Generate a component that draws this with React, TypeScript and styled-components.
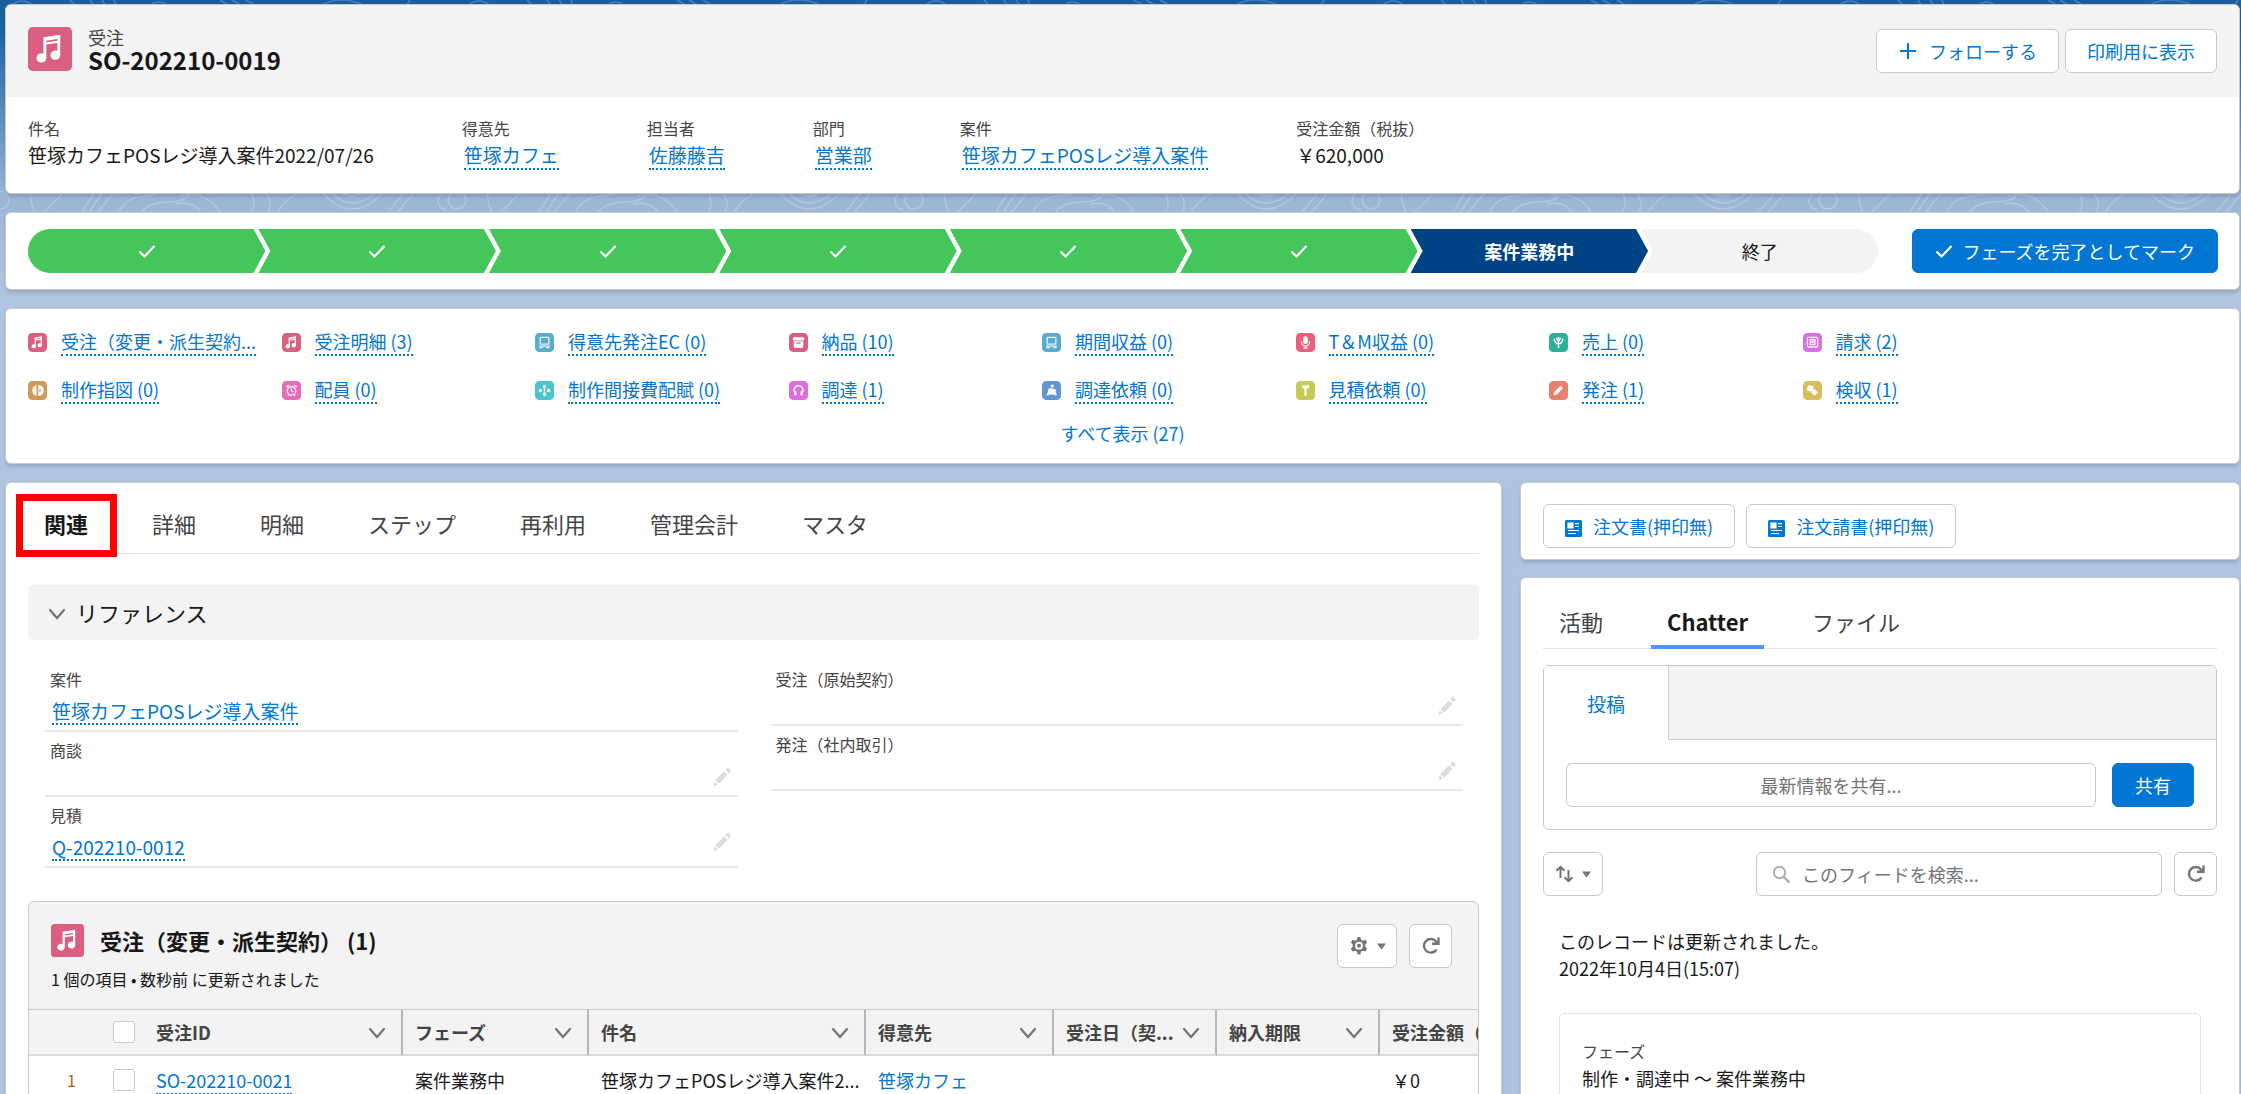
import React from "react";
import styled, { createGlobalStyle, css } from "styled-components";

const blue = "#0176d3";
const line = "#e2e2e2";
const border = "#c9c9c9";

const Global = createGlobalStyle`
  *, *::before, *::after { box-sizing: border-box; }
  body {
    margin: 0;
    background: #b0c4df;
    color: #181818;
    font-family: "Noto Sans CJK JP", "Noto Sans", sans-serif;
    font-size: 18px;
    line-height: 27px;
  }
  button, input { font: inherit; }
  h1, h2, p, dl, dd, ul { margin: 0; padding: 0; }
`;

const Page = styled.div`
  position: relative;
  isolation: isolate;
  display: flex;
  flex-direction: column;
  gap: 18px;
  height: 100vh;
  overflow: hidden;
  padding: 4px 1px 0 5px;
`;

const Backdrop = styled.div`
  position: absolute;
  inset: 0;
  z-index: -1;
  background: linear-gradient(#195e9f 0, #1c62a4 30px, #9ab5d5 196px, #b0c4df 280px);
  svg { display: block; width: 100%; height: 290px; }
`;

const Card = styled.section`
  flex-shrink: 0;
  background: #fff;
  border: 1px solid ${border};
  border-radius: 6px;
  box-shadow: 0 3px 3px rgba(0, 0, 0, 0.12);
`;

const Link = styled.a`
  color: ${blue};
  text-decoration: none;
  white-space: nowrap;
`;

const DottedLink = styled(Link)`
  border-bottom: 2px dotted ${blue};
`;

const buttonBase = css`
  display: inline-flex;
  align-items: center;
  justify-content: center;
  height: 44px;
  border-radius: 6px;
  white-space: nowrap;
  cursor: pointer;
`;

const Button = styled.button`
  ${buttonBase}
  gap: 11px;
  padding: 0 21px;
  background: #fff;
  border: 1px solid ${border};
  color: ${blue};
`;

const BrandButton = styled.button`
  ${buttonBase}
  gap: 9px;
  padding: 0 22px;
  background: ${blue};
  border: 1px solid ${blue};
  color: #fff;
`;

const ToolButton = styled.button<{ $wide?: boolean }>`
  ${buttonBase}
  flex-shrink: 0;
  gap: 8px;
  width: ${(p) => (p.$wide ? 60 : 43)}px;
  padding: 0;
  background: #fff;
  border: 1px solid ${border};
  color: #747474;
`;

/* record header */

const RecordTop = styled.header`
  display: flex;
  align-items: flex-start;
  justify-content: space-between;
  padding: 22px 22px 24px;
  background: #f3f3f3;
  border-radius: 5px 5px 0 0;
`;

const RecordTitle = styled.div`
  display: flex;
  gap: 16px;
  p { line-height: 20px; color: #444; }
  h1 { font-size: 24px; line-height: 26px; font-weight: 700; }
`;

const TitleText = styled.div`
  height: 46px;
`;

const Actions = styled.div`
  display: flex;
  gap: 6px;
  padding-top: 2px;
`;

const Highlights = styled.dl`
  display: flex;
  gap: 88px;
  padding: 19px 22px 23px;
  dt { font-size: 16px; line-height: 24px; color: #444; }
  dd { font-size: 19px; line-height: 30px; white-space: nowrap; }
  dd a { display: inline-block; line-height: 26px; margin-left: 2px; }
`;

/* path */

const PathCard = styled(Card)`
  display: flex;
  align-items: center;
  gap: 34px;
  padding: 16px 21px 16px 22px;
`;

const PathList = styled.ol`
  flex: 1;
  display: flex;
  height: 44px;
  margin: 0;
  padding: 0;
  list-style: none;
  border-radius: 22px;
  overflow: hidden;
`;

const Step = styled.li<{ $state: "done" | "current" | "todo" }>`
  flex: 1;
  display: flex;
  align-items: center;
  justify-content: center;
  background: ${(p) => ({ done: "#45c65a", current: "#014486", todo: "#f3f3f3" })[p.$state]};
  color: ${(p) => (p.$state === "todo" ? "#181818" : "#fff")};
  font-weight: ${(p) => (p.$state === "current" ? 700 : 400)};
  clip-path: polygon(0 0, calc(100% - 12px) 0, 100% 50%, calc(100% - 12px) 100%, 0 100%, 12px 50%);
  & + & { margin-left: -7px; }
  &:first-child { clip-path: polygon(0 0, calc(100% - 12px) 0, 100% 50%, calc(100% - 12px) 100%, 0 100%); }
  &:last-child { clip-path: polygon(0 0, 100% 0, 100% 100%, 0 100%, 12px 50%); }
`;

/* related quick links */

const QuickCard = styled(Card)`
  display: flex;
  flex-direction: column;
  align-items: center;
  gap: 16px;
  padding: 19px 22px 16px;
`;

const QuickGrid = styled.ul`
  align-self: stretch;
  display: grid;
  grid-template-columns: repeat(8, minmax(0, 1fr));
  row-gap: 20px;
  margin-right: 161px;
  list-style: none;
`;

const QuickItem = styled.li`
  display: flex;
  align-items: center;
  gap: 14px;
  svg { flex-shrink: 0; }
  a { line-height: 26px; }
`;

/* main columns */

const Columns = styled.div`
  flex: 1;
  min-height: 0;
  display: grid;
  grid-template-columns: minmax(0, 1497fr) minmax(0, 720fr);
  gap: 18px;
`;

const MainCard = styled(Card)`
  padding: 10px 22px 0;
`;

const Side = styled.div`
  display: flex;
  flex-direction: column;
  gap: 17px;
`;

const Tabs = styled.div<{ $height: number }>`
  display: flex;
  gap: 64px;
  height: ${(p) => p.$height}px;
  padding: 0 16px;
  border-bottom: 1px solid ${line};
`;

const Tab = styled.button<{ $active?: boolean }>`
  position: relative;
  padding: 0;
  background: none;
  border: 0;
  color: ${(p) => (p.$active ? "#181818" : "#444")};
  font-size: 22px;
  line-height: 32px;
  font-weight: ${(p) => (p.$active ? 700 : 400)};
  cursor: pointer;
  ${(p) =>
    p.$active &&
    css`
      &::after {
        content: "";
        position: absolute;
        left: -16px;
        right: -16px;
        bottom: -1px;
        height: 4px;
        background: #4b96ff;
      }
    `}
`;

const Marker = styled.span`
  position: absolute;
  z-index: 1;
  inset: 1px -29px -4px -28px;
  border: 7px solid #f00;
`;

const SectionHead = styled.button`
  display: flex;
  align-items: center;
  gap: 10px;
  width: 100%;
  height: 55px;
  margin: 31px 0 21px;
  padding: 0 20px;
  background: #f3f3f3;
  border: 0;
  border-radius: 5px;
  color: #181818;
  font-size: 22px;
  cursor: pointer;
`;

const FieldColumns = styled.div`
  display: grid;
  grid-template-columns: 1fr 1fr;
  column-gap: 33px;
  padding: 0 16px 0 17px;
`;

const Field = styled.div<{ $filled?: boolean }>`
  display: flex;
  justify-content: space-between;
  height: ${(p) => (p.$filled ? 71 : 65)}px;
  padding: 6px 7px 0 5px;
  border-bottom: 2px solid #e8e8e8;
`;

const FieldBody = styled.div`
  display: flex;
  flex-direction: column;
  align-items: flex-start;
  gap: 7px;
  span { font-size: 16px; line-height: 24px; color: #444; }
  a { margin-left: 2px; font-size: 19px; line-height: 25px; }
`;

const EditButton = styled.button`
  align-self: flex-start;
  display: flex;
  margin-top: 29px;
  padding: 0;
  background: none;
  border: 0;
  color: #dcdcdc;
  cursor: pointer;
`;

/* related list */

const ListCard = styled.section`
  height: 320px;
  margin-top: 33px;
  border: 1px solid ${border};
  border-radius: 6px;
  background: #f3f3f3;
  overflow: hidden;
`;

const ListHead = styled.header`
  display: flex;
  justify-content: space-between;
  align-items: flex-start;
  height: 107px;
  padding: 22px 26px 0 22px;
  p { padding-top: 10px; font-size: 16px; line-height: 24px; }
`;

const ListTitle = styled.div`
  display: flex;
  align-items: center;
  gap: 16px;
  h2 { font-size: 22px; line-height: 33px; font-weight: 700; }
`;

const ToolRow = styled.div`
  display: flex;
  gap: 12px;
`;

const Table = styled.table`
  table-layout: fixed;
  width: 1624px;
  border-collapse: separate;
  border-spacing: 0;
  background: #fff;
  th, td { padding: 0 12px; text-align: left; white-space: nowrap; }
  th { height: 47px; background: #f3f3f3; border-top: 1px solid ${border}; border-bottom: 2px solid #dddbda; color: #444; font-weight: 700; }
  td { height: 48px; }
  td a { line-height: 26px; }
`;

const ColHead = styled.th<{ $plain?: boolean }>`
  ${(p) => !p.$plain && css`border-right: 2px solid #b8b8b8;`}
`;

const HeadCell = styled.div`
  display: flex;
  align-items: center;
  justify-content: space-between;
  padding-right: 3px;
  svg { flex-shrink: 0; }
`;

const RowNumber = styled.td`
  && { padding-right: 25px; text-align: right; color: #a86403; font-size: 16px; }
`;

const Tick = styled.input`
  appearance: none;
  display: block;
  width: 22px;
  height: 22px;
  margin: 0;
  background: #fff;
  border: 1px solid ${border};
  border-radius: 3px;
`;

/* side panel */

const DocCard = styled(Card)`
  display: flex;
  gap: 11px;
  padding: 21px 22px 11px;
`;

const FeedCard = styled(Card)`
  flex: 1;
  padding: 16px 22px 0;
`;

const Publisher = styled.div`
  margin: 16px 0 22px;
  border: 1px solid ${border};
  border-radius: 6px;
  overflow: hidden;
`;

const PublisherTabs = styled.div`
  display: flex;
  height: 74px;
  &::after { content: ""; flex: 1; background: #f3f3f3; border-bottom: 1px solid ${border}; }
`;

const PublisherTab = styled.button`
  width: 125px;
  padding: 0;
  background: #fff;
  border: 0;
  border-right: 1px solid ${border};
  color: ${blue};
  font-size: 19px;
  cursor: pointer;
`;

const ShareRow = styled.div`
  display: flex;
  gap: 16px;
  padding: 23px 22px 22px;
`;

const TextInput = styled.input`
  flex: 1;
  min-width: 0;
  height: 44px;
  padding: 0 16px;
  background: #fff;
  border: 1px solid ${border};
  border-radius: 6px;
  text-align: center;
  &::placeholder { color: #747474; opacity: 1; }
`;

const FeedTools = styled.div`
  display: flex;
  justify-content: space-between;
`;

const FeedSearch = styled.div`
  flex: 0 1 461px;
  display: flex;
  gap: 12px;
`;

const SearchBox = styled.label`
  flex: 1;
  display: flex;
  align-items: center;
  gap: 11px;
  height: 44px;
  padding: 0 15px;
  background: #fff;
  border: 1px solid ${border};
  border-radius: 6px;
  input { flex: 1; min-width: 0; padding: 0; border: 0; outline: 0; background: none; }
  input::placeholder { color: #747474; opacity: 1; }
`;

const Post = styled.article`
  padding: 32px 16px 0;
`;

const Change = styled.div`
  height: 160px;
  margin-top: 31px;
  padding: 24px 22px;
  border: 1px solid ${line};
  border-radius: 5px;
  span { display: block; font-size: 16px; color: #444; }
`;

/* drawings */

const glyphs: Record<string, React.ReactNode> = {
  music: (
    <>
      <path d="M8.4 5.6 17.6 4.2v11.2a2.7 2.5 0 1 1-1.6-2.3V8.7l-6 .9v7.3a2.7 2.5 0 1 1-1.6-2.3z" fill="#fff" />
      <path d="M10 7.9l6-.9" stroke="#db5f81" strokeWidth=".9" />
    </>
  ),
  laptop: <g fill="none" stroke="#fff" strokeOpacity=".85" strokeWidth="1.6"><rect x="6.500" y="5.500" width="11" height="8.500" rx="1" /><path d="M6.500 15v3.500h2.500v-2h6v2h2.500V15" /></g>,
  box: <g fill="#fff"><rect x="5" y="5.5" width="14" height="4" rx="1" /><path d="M6 10.5h12V17a2 2 0 0 1-2 2H8a2 2 0 0 1-2-2zM9.500 12v1.500h5V12z" fillRule="evenodd" /></g>,
  mic: <g fill="none" stroke="#fff" strokeWidth="1.6"><rect x="10" y="5" width="4" height="8" rx="2" fill="#fff" /><path d="M7 10.500v1a5 5 0 0 0 10 0v-1M12 16.500V19M9.500 19h5" /></g>,
  plant: <g fill="none" stroke="#fff" strokeWidth="1.800"><path d="M12 19V5M12 14c-3.500-.5-5-3-5.500-7M12 14c3.500-.5 5-3 5.500-7M12 11.500 9.500 6M12 11.500 14.500 6" /></g>,
  safe: <g fill="none" stroke="#fff" strokeWidth="1.600"><rect x="5.500" y="5.500" width="13" height="12" rx="1.500" /><rect x="9" y="8.500" width="6" height="6" /><circle cx="12" cy="11.500" r=".8" /><path d="M7.500 17.500V19M16.500 17.500V19" /></g>,
  globe: <g fill="#fff"><path d="M10.800 5.200v13.600a7 7 0 0 1 0-13.600z" opacity=".9" /><path d="M13 5v14a7 7 0 0 0 0-14zm1.500 4.500 2.500 2.500-2.500 2.500z" fillRule="evenodd" /></g>,
  alarm: <g fill="none" stroke="#fff" strokeWidth="1.700"><circle cx="12" cy="12.500" r="5.300" /><path d="M12 9.500v3l2 1.200M5.500 7.500l3-2.500M18.500 7.500l-3-2.500M7.500 18.500l1.200-1.500M16.500 18.500 15.300 17" /></g>,
  cross: <g fill="#fff"><circle cx="6.800" cy="12" r="2.200" /><circle cx="17.200" cy="12" r="2.200" /><rect x="10.300" y="5" width="3.400" height="4.800" rx="1.700" /><rect x="10.300" y="14.200" width="3.400" height="4.800" rx="1.700" /><rect x="11" y="10.500" width="2" height="3" rx="1" /></g>,
  headset: <g fill="none" stroke="#fff" strokeWidth="1.800"><path d="M6.500 14v-2.500a5.500 5.500 0 0 1 11 0V14" /><path d="M8 13v5M16 13v5" strokeWidth="3" /></g>,
  people: <g fill="#fff"><circle cx="13" cy="6.300" r="2" /><path d="m8 9.500 4-.5 3.500 1 3 1.500-1.500 2 2 4.500h-4l-1-2-1.800 2-1.700-2-1.500 2H5.500l2-4.500z" /></g>,
  hammer: <g fill="#fff"><path d="M7.500 5.500h9V9H14l-.8 2h-2.400L10 9H7.500z" /><rect x="10.600" y="11" width="2.800" height="8" rx="1.400" /></g>,
  pen: <path d="m6 18 .8-4L14.500 6l3.200 3.200L10 17.200z" fill="#fff" />,
  tags: <g fill="#fff"><rect x="5.500" y="5.500" width="7.500" height="7.500" rx="1.500" transform="rotate(8 9 9)" /><path d="m14.500 9.500 4.500 5-4.500 4.500L10 14.500z" stroke="#d8bd5c" strokeWidth=".6" /></g>,
};

const EntityIcon = ({ name, color, size }: { name: string; color: string; size: number }) => (
  <svg width={size} height={size} viewBox="0 0 24 24" aria-hidden="true">
    <rect width="24" height="24" rx={size < 25 ? 5.5 : 2.6} fill={color} />
    {glyphs[name]}
  </svg>
);

const Check = ({ size = 18 }: { size?: number }) => (
  <svg width={size} height={size} viewBox="0 0 18 18" fill="none" stroke="currentColor" strokeWidth="2.2" aria-hidden="true">
    <path d="m1.500 9.500 5 5L16.500 4" />
  </svg>
);

const Chevron = () => (
  <svg width="18" height="18" viewBox="0 0 18 18" fill="none" stroke="#747474" strokeWidth="2.200" strokeLinecap="round" aria-hidden="true">
    <path d="m2 6 7 8 7-8" />
  </svg>
);

const Plus = () => (
  <svg width="20" height="20" viewBox="0 0 20 20" stroke="currentColor" strokeWidth="2.200" aria-hidden="true">
    <path d="M10 2v16M2 10h16" />
  </svg>
);

const Pencil = () => (
  <svg width="18" height="20" viewBox="0 0 18 20" fill="currentColor" aria-hidden="true">
    <path d="M11 4.200 14.600 7.800 6 16.800 2.400 13.200zM12.200 3l1.900-2a1 1 0 0 1 1.400 0L17.400 3a1 1 0 0 1 0 1.400l-1.800 2zM1.700 14.300l3.200 3.300L.5 19z" />
  </svg>
);

const Caret = () => (
  <svg width="9" height="7" viewBox="0 0 9 7" fill="currentColor" aria-hidden="true">
    <path d="M0 .5h9L4.500 6.500z" />
  </svg>
);

const Refresh = () => (
  <svg width="20" height="20" viewBox="0 0 20 20" fill="none" stroke="currentColor" strokeWidth="2.400" aria-hidden="true">
    <path d="M15.500 13.500A6.800 6.800 0 1 1 15 5.500l1.500 1.800" />
    <path d="M17.500 1.500v6.300H11" />
  </svg>
);

const Gear = () => (
  <svg width="20" height="20" viewBox="0 0 20 20" fill="currentColor" aria-hidden="true">
    <path
      fillRule="evenodd"
      d="M8.600 1h2.800l.6 2.700 1.700 1 2.700-.9 1.700 2.700-1.800 2v2.200l1.800 2.100-1.700 2.700-2.700-.8-1.700.9-.6 2.900H8.600L8 15.600l-1.700-.9-2.700.8-1.700-2.700 1.800-2.100V8.500l-1.800-2 1.700-2.700 2.700.9 1.700-1zM10 5.800a3.900 3.900 0 1 0 0 7.800 3.900 3.900 0 0 0 0-7.800z"
    />
    <circle cx="10" cy="9.700" r="2" />
  </svg>
);

const Sort = () => (
  <svg width="19" height="18" viewBox="0 0 19 18" fill="none" stroke="currentColor" strokeWidth="2" aria-hidden="true">
    <path d="M5.500 13V2M1.500 5.800l4-4 4 4M13.500 5v11M9.500 12.200l4 4 4-4" />
  </svg>
);

const Search = () => (
  <svg width="19" height="19" viewBox="0 0 19 19" fill="none" stroke="#b0b0b0" strokeWidth="2" aria-hidden="true">
    <circle cx="7.500" cy="7.500" r="5.700" />
    <path d="m11.800 11.800 5.700 5.700" strokeWidth="2.600" />
  </svg>
);

const DocIcon = () => (
  <svg width="17" height="21" viewBox="0 0 17 21" aria-hidden="true">
    <rect y="4" width="17" height="17" rx="1.500" fill={blue} />
    <path d="M3 7h5v5H3zM10 7.700h4M10 10.500h4M3 14.500h11M3 17.500h8" fill="#fff" stroke="#fff" strokeWidth="1.200" />
  </svg>
);

const Contours = () => (
  <svg aria-hidden="true">
    <defs>
      <pattern id="contours" width="457" height="290" patternUnits="userSpaceOnUse" x="-10">
        <g fill="none" stroke="#fff" strokeOpacity=".2" strokeWidth="1.600">
          <path d="M40 190q2 34 16 20t20-20M92 212l14-22M98 214l16-24M106 214l20-24" />
          <path d="M128 214q6-16 26-18t22-8M150 214q8-12 28-12t24-12M190 196q26-6 40 16M186 204q18-4 26 10" />
          <path d="M338 190q22 24 46 4M346 188q16 16 32 0M330 190q30 36 62 4" />
          <path d="M398 212l20-24M406 214l22-26" />
          <circle cx="10" cy="200" r="9" />
          <circle cx="457" cy="201" r="9" />
          <path d="M260 190q8 14 0 24M272 188q14 16 4 26M286 214q16-26 38-22" />
          <path d="M20 6q12-10 24 0M80 0l6 6M100 0l4 6M112 0l4 6M124 0l2 6M160 6q8-8 18 0M230 0l10 6M242 0l10 6M256 0l10 6M330 6q20-12 46 0M420 0l-4 6" />
        </g>
      </pattern>
    </defs>
    <rect width="100%" height="214" fill="url(#contours)" />
  </svg>
);

/* data */

const highlights = [
  { label: "件名", value: "笹塚カフェPOSレジ導入案件2022/07/26" },
  { label: "得意先", value: "笹塚カフェ", link: true },
  { label: "担当者", value: "佐藤藤吉", link: true },
  { label: "部門", value: "営業部", link: true },
  { label: "案件", value: "笹塚カフェPOSレジ導入案件", link: true },
  { label: "受注金額（税抜）", value: "￥620,000" },
];

const quickLinks = [
  ["music", "#db5f81", "受注（変更・派生契約..."],
  ["music", "#db5f81", "受注明細 (3)"],
  ["laptop", "#56adcd", "得意先発注EC (0)"],
  ["box", "#db5f81", "納品 (10)"],
  ["laptop", "#56adcd", "期間収益 (0)"],
  ["mic", "#ea5f7b", "T＆M収益 (0)"],
  ["plant", "#2fae98", "売上 (0)"],
  ["safe", "#da6ee6", "請求 (2)"],
  ["globe", "#cf9b5b", "制作指図 (0)"],
  ["alarm", "#e66cbf", "配員 (0)"],
  ["cross", "#49c6c9", "制作間接費配賦 (0)"],
  ["headset", "#e06ce0", "調達 (1)"],
  ["people", "#6096d5", "調達依頼 (0)"],
  ["hammer", "#c3cb55", "見積依頼 (0)"],
  ["pen", "#e9806e", "発注 (1)"],
  ["tags", "#d8bd5c", "検収 (1)"],
];

const tabs = ["関連", "詳細", "明細", "ステップ", "再利用", "管理会計", "マスタ"];
const columns = ["受注ID", "フェーズ", "件名", "得意先", "受注日（契...", "納入期限", "受注金額（"];
const columnWidths = [72, 43, 259, 186, 277, 188, 163, 163, 273];

const FieldRow = ({ label, value, editable }: { label: string; value?: string; editable?: boolean }) => (
  <Field $filled={Boolean(value)}>
    <FieldBody>
      <span>{label}</span>
      {value && <DottedLink href="#">{value}</DottedLink>}
    </FieldBody>
    {editable && (
      <EditButton aria-label={`${label}を編集`}>
        <Pencil />
      </EditButton>
    )}
  </Field>
);

export default function App() {
  return (
    <Page>
      <Global />
      <Backdrop>
        <Contours />
      </Backdrop>

      <Card>
        <RecordTop>
          <RecordTitle>
            <EntityIcon name="music" color="#db5f81" size={44} />
            <TitleText>
              <p>受注</p>
              <h1>SO-202210-0019</h1>
            </TitleText>
          </RecordTitle>
          <Actions>
            <Button><Plus />フォローする</Button>
            <Button>印刷用に表示</Button>
          </Actions>
        </RecordTop>
        <Highlights>
          {highlights.map((h) => (
            <div key={h.label}>
              <dt>{h.label}</dt>
              <dd>{h.link ? <DottedLink href="#">{h.value}</DottedLink> : h.value}</dd>
            </div>
          ))}
        </Highlights>
      </Card>

      <PathCard>
        <PathList>
          {[1, 2, 3, 4, 5, 6].map((n) => (
            <Step key={n} $state="done"><Check /></Step>
          ))}
          <Step $state="current">案件業務中</Step>
          <Step $state="todo">終了</Step>
        </PathList>
        <BrandButton><Check />フェーズを完了としてマーク</BrandButton>
      </PathCard>

      <QuickCard>
        <QuickGrid>
          {quickLinks.map(([icon, color, text]) => (
            <QuickItem key={text}>
              <EntityIcon name={icon} color={color} size={19} />
              <DottedLink href="#">{text}</DottedLink>
            </QuickItem>
          ))}
        </QuickGrid>
        <Link href="#">すべて表示 (27)</Link>
      </QuickCard>

      <Columns>
        <MainCard>
          <Tabs $height={61}>
            {tabs.map((t, i) => (
              <Tab key={t} $active={i === 0}>
                {t}
                {i === 0 && <Marker />}
              </Tab>
            ))}
          </Tabs>

          <SectionHead><Chevron />リファレンス</SectionHead>
          <FieldColumns>
            <div>
              <FieldRow label="案件" value="笹塚カフェPOSレジ導入案件" />
              <FieldRow label="商談" editable />
              <FieldRow label="見積" value="Q-202210-0012" editable />
            </div>
            <div>
              <FieldRow label="受注（原始契約）" editable />
              <FieldRow label="発注（社内取引）" editable />
            </div>
          </FieldColumns>

          <ListCard>
            <ListHead>
              <div>
                <ListTitle>
                  <EntityIcon name="music" color="#db5f81" size={33} />
                  <h2>受注（変更・派生契約） (1)</h2>
                </ListTitle>
                <p>1 個の項目 • 数秒前 に更新されました</p>
              </div>
              <ToolRow>
                <ToolButton $wide aria-label="リストビューコントロール"><Gear /><Caret /></ToolButton>
                <ToolButton aria-label="更新"><Refresh /></ToolButton>
              </ToolRow>
            </ListHead>
            <Table>
              <colgroup>
                {columnWidths.map((w, i) => <col key={i} width={w} />)}
              </colgroup>
              <thead>
                <tr>
                  <ColHead $plain />
                  <ColHead $plain><Tick type="checkbox" aria-label="すべて選択" /></ColHead>
                  {columns.map((c) => (
                    <ColHead key={c}>
                      <HeadCell>{c}<Chevron /></HeadCell>
                    </ColHead>
                  ))}
                </tr>
              </thead>
              <tbody>
                <tr>
                  <RowNumber>1</RowNumber>
                  <td><Tick type="checkbox" aria-label="行 1 を選択" /></td>
                  <td><DottedLink href="#">SO-202210-0021</DottedLink></td>
                  <td>案件業務中</td>
                  <td>笹塚カフェPOSレジ導入案件2...</td>
                  <td><Link href="#">笹塚カフェ</Link></td>
                  <td />
                  <td />
                  <td>￥0</td>
                </tr>
              </tbody>
            </Table>
          </ListCard>
        </MainCard>

        <Side>
          <DocCard>
            <Button><DocIcon />注文書(押印無)</Button>
            <Button><DocIcon />注文請書(押印無)</Button>
          </DocCard>
          <FeedCard>
            <Tabs $height={55}>
              <Tab>活動</Tab>
              <Tab $active>Chatter</Tab>
              <Tab>ファイル</Tab>
            </Tabs>
            <Publisher>
              <PublisherTabs><PublisherTab>投稿</PublisherTab></PublisherTabs>
              <ShareRow>
                <TextInput aria-label="最新情報を共有" placeholder="最新情報を共有..." />
                <BrandButton>共有</BrandButton>
              </ShareRow>
            </Publisher>
            <FeedTools>
              <ToolButton $wide aria-label="並び替え"><Sort /><Caret /></ToolButton>
              <FeedSearch>
                <SearchBox>
                  <Search />
                  <input type="text" aria-label="このフィードを検索" placeholder="このフィードを検索..." />
                </SearchBox>
                <ToolButton aria-label="フィードを更新"><Refresh /></ToolButton>
              </FeedSearch>
            </FeedTools>
            <Post>
              <p>このレコードは更新されました。</p>
              <p>2022年10月4日(15:07)</p>
              <Change>
                <span>フェーズ</span>
                制作・調達中 ～ 案件業務中
              </Change>
            </Post>
          </FeedCard>
        </Side>
      </Columns>
    </Page>
  );
}
